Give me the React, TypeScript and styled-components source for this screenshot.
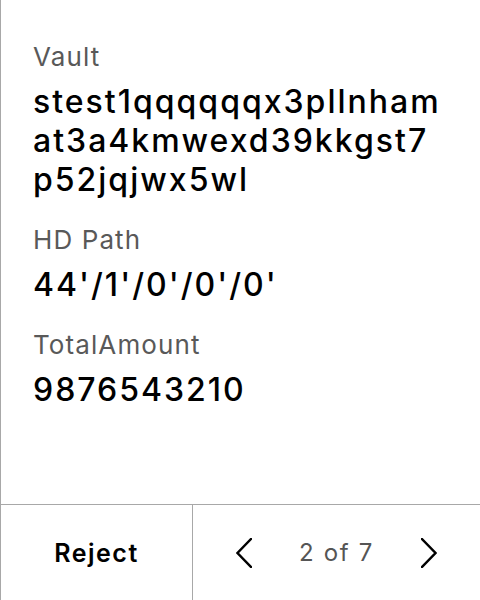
import React from "react";
import styled, { createGlobalStyle } from "styled-components";

const Global = createGlobalStyle`
  html, body { margin: 0; padding: 0; background: #fff; }
  body { font-family: Inter, "Noto Sans", sans-serif; }
  * { box-sizing: border-box; }
`;

const Screen = styled.div`
  width: 480px;
  height: 600px;
  display: flex;
  flex-direction: column;
  border-left: 1px solid #a8a8a8;
  background: #fff;
`;

const Content = styled.div`
  flex: 1;
  display: flex;
  flex-direction: column;
  gap: 25px;
  padding: 41px 37px 0 32px;
`;

const Field = styled.div`
  display: flex;
  flex-direction: column;
  gap: 9px;
`;

const Label = styled.div`
  font-size: 26px;
  line-height: 32px;
  letter-spacing: 1.1px;
  color: #595959;
`;

const Value = styled.div`
  font-size: 32px;
  font-weight: 500;
  line-height: 39px;
  letter-spacing: 2px;
  color: #000;
  word-break: break-all;
`;

const Footer = styled.div`
  height: 96px;
  display: flex;
  border-top: 1px solid #a8a8a8;
`;

const RejectButton = styled.button`
  width: 192px;
  border: none;
  border-right: 1px solid #a8a8a8;
  background: none;
  font-family: Inter, sans-serif;
  font-size: 25px;
  font-weight: 600;
  letter-spacing: 1.5px;
  color: #000;
  padding: 0;
`;

const Pager = styled.div`
  flex: 1;
  display: flex;
  align-items: center;
  justify-content: center;
  gap: 47px;
`;

const PageText = styled.span`
  font-size: 24px;
  letter-spacing: 1.7px;
  color: #555;
`;

const Chevron = ({ dir }: { dir: "left" | "right" }) => (
  <svg width="16" height="30" viewBox="0 0 16 30" fill="none">
    <path
      d={dir === "left" ? "M15 1 L1.5 15 L15 29" : "M1 1 L14.5 15 L1 29"}
      stroke="#000"
      strokeWidth="2.4"
      strokeLinecap="square"
      strokeLinejoin="miter"
    />
  </svg>
);

export default function App() {
  return (
    <>
      <Global />
      <Screen>
        <Content>
          <Field>
            <Label>Vault</Label>
            <Value>stest1qqqqqqx3pllnhamat3a4kmwexd39kkgst7p52jqjwx5wl</Value>
          </Field>
          <Field>
            <Label>HD Path</Label>
            <Value>44'/1'/0'/0'/0'</Value>
          </Field>
          <Field>
            <Label>TotalAmount</Label>
            <Value>9876543210</Value>
          </Field>
        </Content>
        <Footer>
          <RejectButton>Reject</RejectButton>
          <Pager>
            <Chevron dir="left" />
            <PageText>2 of 7</PageText>
            <Chevron dir="right" />
          </Pager>
        </Footer>
      </Screen>
    </>
  );
}
